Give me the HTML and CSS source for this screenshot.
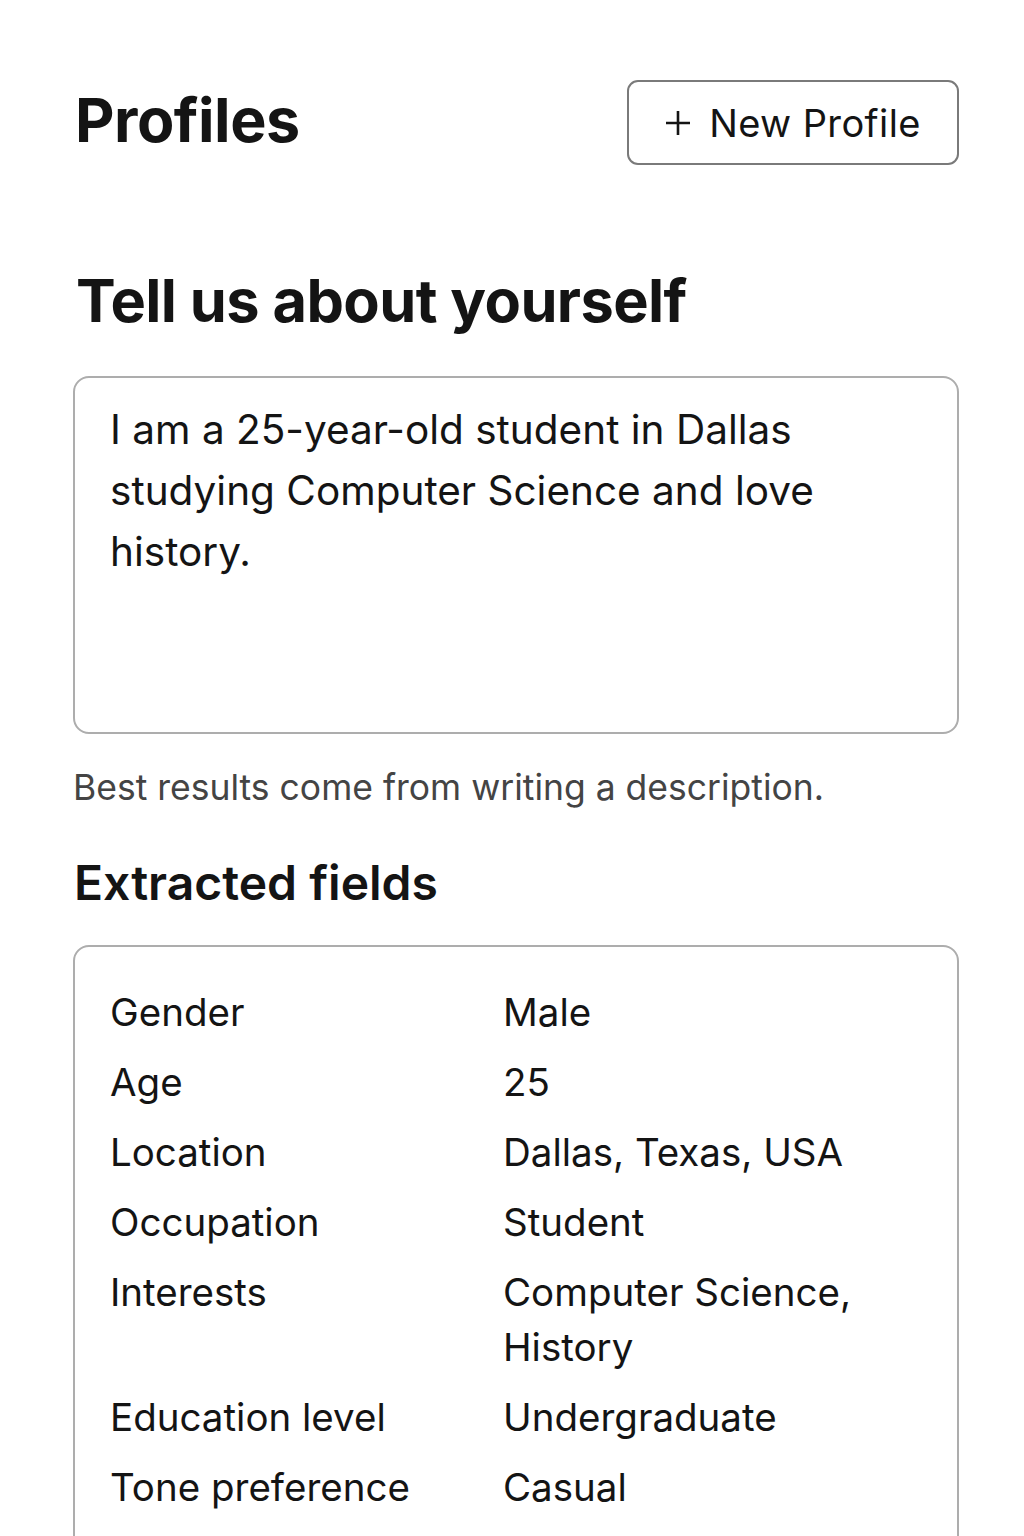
FILE: index.html
```html
<!DOCTYPE html>
<html lang="en">
<head>
<meta charset="utf-8">
<title>Profiles</title>
<link rel="stylesheet" href="styles.css">
</head>
<body>
<main class="page">
  <header class="header">
    <h1 class="title">Profiles</h1>
    <button class="new-btn" type="button"><svg class="plus" width="26" height="26" viewBox="0 0 26 26" aria-hidden="true"><path d="M13 1V25M1 13H25" stroke="#141414" stroke-width="2.6" fill="none"/></svg><span>New Profile</span></button>
  </header>

  <section class="about">
    <h2 class="about-title">Tell us about yourself</h2>
    <div class="desc">I am a 25-year-old student in Dallas studying Computer Science and love history.</div>
    <p class="hint">Best results come from writing a description.</p>
  </section>

  <section class="extracted">
    <h3 class="ext-title">Extracted fields</h3>
    <div class="fields">
      <div class="label">Gender</div><div class="value">Male</div>
      <div class="label">Age</div><div class="value">25</div>
      <div class="label">Location</div><div class="value">Dallas, Texas, USA</div>
      <div class="label">Occupation</div><div class="value">Student</div>
      <div class="label">Interests</div><div class="value">Computer Science, History</div>
      <div class="label">Education level</div><div class="value">Undergraduate</div>
      <div class="label">Tone preference</div><div class="value">Casual</div>
    </div>
  </section>
</main>
</body>
</html>
```

FILE: styles.css
```css
* { box-sizing: border-box; }
html, body { margin: 0; padding: 0; background: #fff; }
body {
  font-family: Inter, "Noto Sans", "Liberation Sans", sans-serif;
  color: #141414;
}
.page {
  padding: 80px 65px 0 73px;
}
.header {
  display: flex;
  align-items: center;
  justify-content: space-between;
  height: 85px;
}
.title {
  margin: 0 0 6px 2px;
  font-size: 61px;
  font-weight: 700;
  letter-spacing: -0.5px;
}
.new-btn {
  width: 332px;
  height: 85px;
  border: 2px solid #7a7a7a;
  border-radius: 11px;
  background: #fff;
  font-family: inherit;
  font-size: 38px;
  letter-spacing: 0.4px;
  color: #141414;
  padding: 0;
  display: flex;
  align-items: center;
  justify-content: center;
  gap: 18px;
}
.plus { flex: none; margin-top: 1px; }
.about-title {
  margin: 100px 0 0 3px;
  font-size: 59.5px;
  font-weight: 700;
  line-height: 70px;
  letter-spacing: -0.6px;
}
.desc {
  margin-top: 41px;
  height: 358px;
  border: 2px solid #adadad;
  border-radius: 16px;
  padding: 21px 35px;
  font-size: 40.5px;
  line-height: 61px;
}
.hint {
  margin: 32px 0 0 0;
  font-size: 35.5px;
  line-height: 44px;
  color: #444;
}
.ext-title {
  margin: 43px 0 0 1px;
  font-size: 48px;
  font-weight: 600;
  line-height: 60px;
}
.fields {
  margin-top: 32px;
  border: 2px solid #adadad;
  border-radius: 16px;
  padding: 38px 35px 40px;
  display: grid;
  grid-template-columns: 393px 1fr;
  row-gap: 15px;
  font-size: 38.5px;
  line-height: 55px;
}
```
